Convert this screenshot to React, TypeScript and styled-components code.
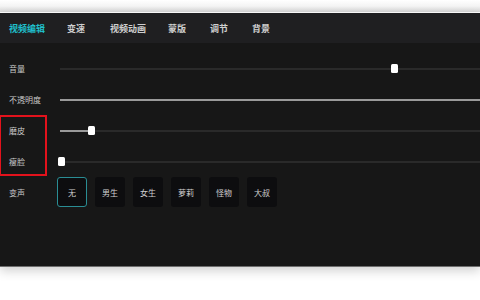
import React from 'react'
import styled, { createGlobalStyle } from 'styled-components'

const GlobalStyle = createGlobalStyle`
  html, body {
    margin: 0;
    padding: 0;
    background: #ffffff;
    font-family: "Noto Sans CJK SC", "Noto Sans", sans-serif;
  }
`

const Page = styled.div`
  width: 480px;
  height: 300px;
  overflow: hidden;
  background: linear-gradient(#ffffff 0px, #f4f4f4 6px, #d6d6d6 12px, #ffffff 12px);
  padding-top: 13px;
  box-sizing: border-box;
`

const Panel = styled.div`
  height: 253px;
  background: #171717;
  border-bottom: 1px solid #6e6e6e;
  box-shadow: 0 4px 10px rgba(0, 0, 0, 0.18);
  display: flex;
  flex-direction: column;
`

const TabBar = styled.div`
  height: 30px;
  background: #1f1f21;
  display: flex;
  align-items: center;
  padding-left: 9px;
`

const Tab = styled.div<{ active?: boolean; w: number }>`
  font-size: 9px;
  font-weight: 700;
  color: ${(p) => (p.active ? '#1fc0cc' : '#cfcfcf')};
  margin-right: ${(p) => p.w}px;
`

const Content = styled.div`
  padding-top: 10px;
  display: flex;
  flex-direction: column;
`

const Row = styled.div`
  height: 31px;
  display: flex;
  align-items: center;
`

const Label = styled.div`
  width: 51px;
  padding-left: 9px;
  font-size: 8px;
  color: #c9c9c9;
  flex-shrink: 0;
`

const Track = styled.div`
  position: relative;
  flex: 1;
  height: 2px;
  background: #2a2a2a;
`

const Fill = styled.div`
  height: 100%;
  background: #9a9a9a;
`

const Thumb = styled.div`
  position: absolute;
  top: -4px;
  width: 7px;
  height: 9px;
  margin-left: -3px;
  background: #ffffff;
  border-radius: 1.5px;
`

const Highlight = styled.div`
  position: relative;
  &::before {
    content: '';
    position: absolute;
    left: -1px;
    top: 0;
    width: 48px;
    height: 61px;
    border: 2px solid #e3121c;
    box-sizing: border-box;
  }
`

const VoiceRow = styled.div`
  display: flex;
  align-items: center;
  height: 30px;
`

const Voices = styled.div`
  display: flex;
  gap: 8px;
  margin-left: -3px;
`

const VoiceButton = styled.div<{ selected?: boolean }>`
  width: 30px;
  height: 30px;
  box-sizing: border-box;
  border-radius: 3px;
  background: #0d0d0f;
  border: 1.5px solid ${(p) => (p.selected ? '#2a8d94' : 'transparent')};
  display: flex;
  align-items: center;
  justify-content: center;
  font-size: 8px;
  color: #cfcfcf;
`

const tabs = [
  { name: '视频编辑', gap: 22 },
  { name: '变速', gap: 25 },
  { name: '视频动画', gap: 22 },
  { name: '蒙版', gap: 24 },
  { name: '调节', gap: 24 },
  { name: '背景', gap: 0 },
]

const voices = ['无', '男生', '女生', '萝莉', '怪物', '大叔']

const Slider = ({ label, value, total = 420 }: { label: string; value: number; total?: number }) => (
  <Row>
    <Label>{label}</Label>
    <Track>
      <Fill style={{ width: value }} />
      {value < total ? <Thumb style={{ left: value }} /> : null}
    </Track>
  </Row>
)

const App = () => {
  return (
    <Page>
      <GlobalStyle />
      <Panel>
        <TabBar>
          {tabs.map((t, i) => (
            <Tab key={t.name} active={i === 0} w={t.gap}>
              {t.name}
            </Tab>
          ))}
        </TabBar>
        <Content>
          <Row>
            <Label>音量</Label>
            <Track>
              <Thumb style={{ left: 334 }} />
            </Track>
          </Row>
          <Slider label="不透明度" value={420} />
          <Highlight>
            <Slider label="磨皮" value={31} />
            <Slider label="瘦脸" value={1} />
          </Highlight>
          <VoiceRow>
            <Label>变声</Label>
            <Voices>
              {voices.map((v, i) => (
                <VoiceButton key={v} selected={i === 0}>
                  {v}
                </VoiceButton>
              ))}
            </Voices>
          </VoiceRow>
        </Content>
      </Panel>
    </Page>
  )
}

export default App
